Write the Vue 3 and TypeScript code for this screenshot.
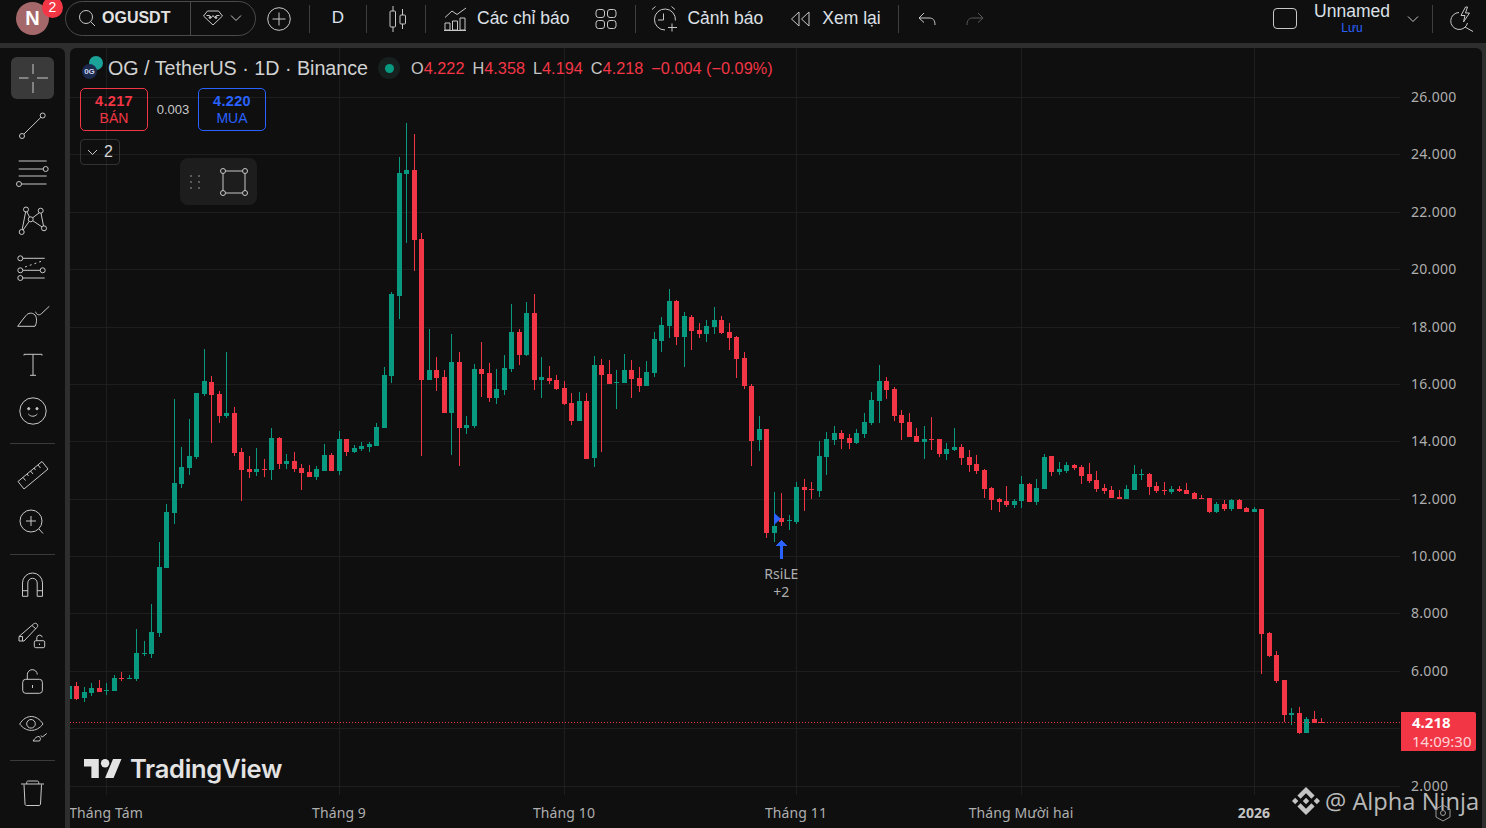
<script setup lang="ts">
type Row = [number, number, number, number, number]

const s8: Row[] = [
[0,1026,1038,1077,1080],[1,1041,1056,1074,1086],[1,1029,1044,1059,1068],[0,1020,1044,1056,1056],[1,1029,1050,1053,1065],[1,1005,1014,1053,1053],[0,996,1014,1017,1023],[1,1005,1014,1017,1017],[1,867,939,1017,1023],[1,903,939,942,948],[1,792,876,942,954],[1,606,681,879,891],[1,492,516,684,684],[1,177,429,519,552],[1,321,381,432,444],[1,237,348,384,405],[1,159,159,351,357],[1,27,123,162,168],[0,108,126,165,309],[0,153,162,228,249],[1,36,219,228,234],[0,201,219,339,348],[0,324,336,390,483],[0,348,387,396,414],[1,324,387,396,408],[0,357,387,390,411],[1,264,294,390,420],[0,291,294,372,387],[1,342,363,372,387],[0,336,363,387,396],[0,372,384,399,450],[0,375,396,411,411],[1,378,387,411,420],[1,312,345,393,393],[0,339,345,393,393],[1,273,297,393,405],[0,297,297,336,348],[1,315,324,336,339],[1,306,318,327,333],[1,306,312,321,336],[1,249,261,318,318],[1,81,105,264,264]]

const s9: Row[] = [
[1,546,552,798,819],[1,141,189,558,627],[1,39,180,192,399],[0,72,180,390,483],[0,369,387,810,1038],[1,657,780,810,810],[0,741,780,804,843],[0,780,801,909,909],[1,672,756,909,1035],[0,726,756,954,1068],[1,918,945,954,972],[1,762,777,948,954],[0,696,777,792,861],[0,759,789,864,876],[1,777,837,864,882],[1,735,774,840,855],[1,582,666,777,786],[0,657,666,735,765],[1,576,609,735,738],[0,552,609,810,840],[1,741,801,810,864],[0,768,804,813,822],[0,795,810,837,840],[0,813,834,882,885],[0,849,879,933,945],[1,846,873,933,933],[0,849,873,1047,1047],[1,738,765,1044,1071],[0,747,765,795,1026],[0,750,792,822,822],[1,780,816,819,897],[1,732,780,819,819],[0,750,780,807,864],[0,771,804,828,846],[1,753,786,828,828],[1,666,687,789,801],[1,621,645,693,726],[1,537,573,648,684],[0,570,573,681,705],[1,606,618,681,771],[0,615,621,663,720],[0,639,660,672,684],[1,630,648,672,696],[1,591,630,651,672],[0,618,630,669,672],[0,639,666,684,720],[0,678,681,747,804],[0,726,744,828,837],[0,822,828,993,1068],[1,918,957,990,1023]]

const s10: Row[] = [
[0,237,237,549,564],[1,426,528,549,576],[0,429,504,516,528],[1,495,510,513,540],[1,396,411,516,522],[0,387,411,420,483],[0,396,417,420,447],[1,273,318,423,441],[1,246,267,321,375],[1,228,249,270,285],[0,240,249,267,297],[0,252,264,279,297],[1,237,249,279,282],[1,189,216,252,264],[1,126,150,219,225],[1,45,93,153,219],[0,81,93,120,147],[0,111,117,198,213],[0,180,195,219,270],[0,189,216,261,261],[0,234,258,276,276],[1,228,267,276,327],[0,201,267,270,300],[0,267,267,312,321],[1,279,297,312,330],[1,234,291,300,303],[0,282,291,324,345],[0,300,321,345,366],[0,315,342,363,372],[0,357,360,417,444],[0,411,414,450,480],[0,444,447,456,486],[0,408,453,465,471],[1,447,453,465,474],[1,378,402,453,474],[0,399,402,456,456],[1,387,414,456,465],[1,312,321,417,417]]

const s11: Row[] = [
[0,48,48,96,108],[1,66,87,96,105],[1,66,75,93,99],[0,72,75,84,90],[0,75,81,108,132],[0,69,102,123,129],[0,93,120,147,156],[0,132,144,153,162],[0,138,150,174,174],[0,150,171,177,177],[1,135,147,177,177],[1,75,102,150,150],[1,87,102,105,120],[0,99,102,141,165],[0,126,138,153,159],[0,126,150,153,165],[1,138,147,156,162],[0,138,147,153,156],[0,129,150,162,162],[0,156,159,177,177],[0,165,174,177,177],[0,174,174,216,219],[1,186,192,216,219],[0,180,192,207,213],[1,177,180,207,213],[0,177,180,207,207],[0,201,204,216,216],[1,201,207,216,216]]

const s7: Row[] = [
[0,-333,-333,42,161],[0,36,39,108,111],[0,93,105,183,189],[0,180,180,285,306],[1,264,279,285,315],[0,261,279,339,342],[1,291,297,339,339],[0,273,297,309,309],[0,294,306,309,309]]

const X0 = 70
const Y0 = 48
const tag = (rows: Row[], base: number) =>
  rows.map(r => ({ g: r[0] === 1, v: r.slice(1).map(n => Math.round(base + n / 3) - Y0) }))
const all = [...tag(s8, 340), ...tag(s9, 110), ...tag(s10, 350), ...tag(s11, 440), ...tag(s7, 620)]

const candles = [
  { x: 69 - X0, g: true, by: 686 - Y0, bh: 13, wy: 686 - Y0, wh: 13 },
  ...all.map((c, i) => {
    const x = Math.round(76 + 7.5 * i + 0.01) - X0
    const [wt, bt, bb, wb] = c.v
    return { x, g: c.g, by: bt, bh: Math.max(1, bb - bt), wy: wt, wh: Math.max(1, wb - wt) }
  })
]

const hLines = [97, 154, 212, 269, 327, 384, 441, 499, 556, 613, 671, 728, 786].map(y => y - Y0)
const vLines = [106, 339, 564, 796, 1021, 1254].map(x => x - X0)
const prices = [
  { t: '26.000', y: 97 }, { t: '24.000', y: 154 }, { t: '22.000', y: 212 }, { t: '20.000', y: 269 },
  { t: '18.000', y: 327 }, { t: '16.000', y: 384 }, { t: '14.000', y: 441 }, { t: '12.000', y: 499 },
  { t: '10.000', y: 556 }, { t: '8.000', y: 613 }, { t: '6.000', y: 671 }, { t: '2.000', y: 786 }
].map(p => ({ t: p.t, y: p.y - Y0 + 5 }))
const times = [
  { t: 'Tháng Tám', x: 106, b: false }, { t: 'Tháng 9', x: 339, b: false }, { t: 'Tháng 10', x: 564, b: false },
  { t: 'Tháng 11', x: 796, b: false }, { t: 'Tháng Mười hai', x: 1021, b: false }, { t: '2026', x: 1254, b: true }
].map(t => ({ ...t, x: t.x - X0 }))
</script>

<template>
  <div class="app">
    <header class="top">
      <div class="avatar">N<span class="badge">2</span></div>
      <div class="pill">
        <div class="search">
          <svg width="20" height="20" viewBox="0 0 20 20" class="ic"><circle cx="9" cy="9" r="6.500"/><path d="M13.800 13.800 18 18"/></svg>
          <span class="sym">OGUSDT</span>
        </div>
        <div class="gem">
          <svg width="20" height="16" viewBox="0 0 20 16" class="ic"><path d="M4.500 1h11L19.500 6 10 15 .5 6z"/><path d="M3.500 5.500h3.200L8.500 7.500 10 5.500 11.500 7.500 13.300 5.500h3.200"/><circle cx="7" cy="7.500" r=".9" fill="#ccc"/><circle cx="13" cy="7.500" r=".9" fill="#ccc"/></svg>
          <svg width="12" height="8" viewBox="0 0 12 8" class="ic"><path d="m1 1.500 5 5 5-5"/></svg>
        </div>
      </div>
      <svg class="ic plus" width="24" height="24" viewBox="0 0 24 24"><circle cx="12" cy="12" r="11.300"/><path d="M12 5.500v13M5.500 12h13"/></svg>
      <i class="sep s1"></i>
      <span class="dbtn">D</span>
      <i class="sep s2"></i>
      <svg class="ic candle" width="19" height="26" viewBox="0 0 19 26"><path d="M5 0v5M5 21v5M14.500 3v6M14.500 18v5"/><rect x="2" y="5" width="5.500" height="16" rx="1"/><rect x="12" y="9" width="5.500" height="9" rx="1"/></svg>
      <i class="sep s3"></i>
      <svg class="ic ind" width="23" height="24" viewBox="0 0 23 24"><path d="M1 10.500 8 4l5 3.500L22 1"/><path d="M1 23v-7h5v7zM8.500 23v-9h5v9zM16 23V11h5v12zM0 23.500h22"/></svg>
      <span class="lbl l1">Các chỉ báo</span>
      <svg class="ic grid4" width="22" height="20" viewBox="0 0 22 20"><rect x="1" y=".5" width="8.500" height="8" rx="2.500"/><rect x="12.500" y=".5" width="8.500" height="8" rx="2.500"/><rect x="1" y="11.500" width="8.500" height="8" rx="2.500"/><rect x="12.500" y="11.500" width="8.500" height="8" rx="2.500"/></svg>
      <i class="sep s4"></i>
      <svg class="ic alarm" width="27" height="26" viewBox="0 0 27 26"><path d="M14 24a10.500 10.500 0 1 1 10.400-9.500"/><path d="M12.500 7.500v6.500H7M1 3.500 4.500.5M20.500.5 24 3.500M21 17.500v8M17 21.500h9"/></svg>
      <span class="lbl l2">Cảnh báo</span>
      <svg class="ic rew" width="20" height="16" viewBox="0 0 20 16"><path d="M9 1 1.500 8 9 15zM19 1l-7.500 7 7.500 7z"/></svg>
      <span class="lbl l3">Xem lại</span>
      <i class="sep s5"></i>
      <svg class="ic undo" width="18" height="14" viewBox="0 0 18 14"><path d="M6 1 1 6l5 4.500M1 6h10c4 0 6 2 6 7"/></svg>
      <svg class="ic redo" width="18" height="14" viewBox="0 0 18 14"><path d="m12 1 5 5-5 4.500M17 6H7c-4 0-6 2-6 7"/></svg>
      <div class="spacer"></div>
      <div class="layout"></div>
      <div class="named"><span class="nm">Unnamed</span><span class="save">Lưu</span></div>
      <svg class="ic chev2" width="12" height="8" viewBox="0 0 12 8"><path d="m1 1.500 5 5 5-5"/></svg>
      <i class="sep s6"></i>
      <svg class="ic bolt" width="24" height="26" viewBox="0 0 24 26"><path d="M9 6.500A8.500 8.500 0 1 0 17.500 17M15 21l8 4.500"/><path d="M15.500 1 11 9.500h4l-1.500 6.500L19.500 7h-4L17.500 1z"/></svg>
    </header>

    <main class="body">
      <aside class="tools">
        <div class="tool active">
          <svg class="ic" width="36" height="36" viewBox="0 0 36 36"><path d="M18 4v10M18 22v11M4 18h9.500M22 18h11"/></svg>
        </div>
        <div class="tool"><svg class="ic" width="36" height="36" viewBox="0 0 36 36"><circle cx="27.700" cy="7.500" r="2.500"/><circle cx="7" cy="28" r="2.500"/><path d="M9 26 25.900 9.300"/></svg></div>
        <div class="tool"><svg class="ic" width="36" height="36" viewBox="0 0 36 36"><path d="M3.700 6h28M3.700 14h24.500M3.700 21h28M6.500 29h25"/><circle cx="30.700" cy="14" r="2.500"/><circle cx="4" cy="29" r="2.500"/></svg></div>
        <div class="tool"><svg class="ic" width="36" height="36" viewBox="0 0 36 36"><path d="M11 7 6.700 29M11 7l4.700 9.300L29 25.300M15.700 16.300 25.700 8.700 29 25.300M6.700 29l9-12.700"/><circle cx="6.700" cy="29" r="2.500" fill="#0f0f0f"/><circle cx="29" cy="25.300" r="2.500" fill="#0f0f0f"/><circle cx="15.700" cy="16.300" r="2.500" fill="#0f0f0f"/><circle cx="25.700" cy="7.700" r="2.500" fill="#0f0f0f"/><circle cx="11" cy="6.500" r="2.500" fill="#0f0f0f"/></svg></div>
        <div class="tool"><svg class="ic" width="36" height="36" viewBox="0 0 36 36"><circle cx="5.300" cy="8.300" r="2.500"/><circle cx="5.300" cy="20.300" r="2.500"/><circle cx="5.300" cy="28" r="2.500"/><circle cx="27.700" cy="20.300" r="2.500"/><path d="M8 8.300h21.700M8 20.300h17M8 28h21.700"/><path d="M10 17l18-6.300" stroke-dasharray="2 3"/></svg></div>
        <div class="tool"><svg class="ic" width="36" height="36" viewBox="0 0 36 36"><path d="M2.700 28.300H20C22 25 22 19 20 17 17 14 13 15 11 17.500 8 21 5 25 2.700 28.300z"/><path d="M20.700 13.700c.3 3 3.500 4 5.500 2.200l8.100-7.600"/></svg></div>
        <div class="tool"><svg class="ic" width="36" height="36" viewBox="0 0 36 36"><path d="M9 9.500V8.300h18v1.200M18 8.300v21M15 29.300h6"/></svg></div>
        <div class="tool"><svg class="ic" width="36" height="36" viewBox="0 0 36 36"><circle cx="18" cy="18" r="13.200"/><circle cx="13.700" cy="15.700" r="1.100" fill="#c8c8c8"/><circle cx="22" cy="15.700" r="1.100" fill="#c8c8c8"/><path d="M13.300 21c2.500 3 6.500 3 9 0"/></svg></div>
        <div class="divider"></div>
        <div class="tool"><svg class="ic" width="36" height="36" viewBox="0 0 36 36"><path d="M3 24.500 27 4.500l6 7.500L9 32z"/><path d="M8 20.500l2.500 3M12 17l1.500 2M15.500 14l2.500 3M19 11l1.500 2M23 8l2.500 3"/></svg></div>
        <div class="tool"><svg class="ic" width="36" height="36" viewBox="0 0 36 36"><circle cx="16" cy="17" r="11"/><path d="M24 25l4 4.500M16 12v10M11 17h10"/></svg></div>
        <div class="divider d2"></div>
        <div class="tool"><svg class="ic" width="36" height="36" viewBox="0 0 36 36"><path d="M7.700 29.300V16a10 10 0 0 1 20 0v13.300h-5.300V16a4.600 4.600 0 0 0-9.400 0v13.300zM7.700 23.700H13M22.400 23.700h5.300" transform="translate(-.200 -2)"/></svg></div>
        <div class="tool"><svg class="ic" width="36" height="36" viewBox="0 0 36 36"><path d="M4 24v-4.500L18.500 7c1.200-1 2.500-1 3.500 0s1 2.200 0 3.300L9 24zM4 19.500h3.500V24M17 8.500l4 3.500"/><rect x="19.300" y="23.700" width="10.400" height="7" rx="1.500"/><path d="M21.800 23.700v-3a2.800 2.800 0 0 1 5.500-.5M24.500 26.500v1.500"/></svg></div>
        <div class="tool"><svg class="ic" width="36" height="36" viewBox="0 0 36 36"><rect x="7.700" y="15.300" width="19.700" height="14" rx="3"/><path d="M12.300 15.300v-4.500a5 5 0 0 1 10-.3M17.500 21v3" /></svg></div>
        <div class="tool t-eye"><svg class="ic" width="36" height="36" viewBox="0 0 36 36"><path d="M4.700 14c6-10 17-10 23.300 0-6.300 8.500-17 8.500-23.300 0z"/><circle cx="16" cy="13.800" r="4.300"/><path d="M18 31h6.500c1.500-1.800 1-3.700-.5-4.500-2-.3-4 1.500-6 4.500zM26 25.500c.3 1.500 1 1.500 2 1l3.700-3"/></svg></div>
        <div class="divider d3"></div>
        <div class="tool"><svg class="ic" width="36" height="36" viewBox="0 0 36 36"><path d="M6 8h23M11.700 8V6.500c0-1 .5-1.500 1.500-1.500h9c1 0 1.500.5 1.500 1.500V8M9 8.500l1 19.500c0 .8.600 1.500 1.500 1.500h12.500c.8 0 1.400-.6 1.500-1.500l1-19.500"/></svg></div>
      </aside>

      <section class="chart">
        <svg class="canvas" width="1412" height="780" viewBox="0 0 1412 780">
          <g shape-rendering="crispEdges">
            <rect v-for="y in hLines" :key="'h' + y" x="0" :y="y" width="1330" height="1" fill="#1e1e1e" />
            <rect v-for="x in vLines" :key="'v' + x" :x="x" y="0" width="1" height="747" fill="#1e1e1e" />
            <g v-for="(c, i) in candles" :key="i" :fill="c.g ? '#089981' : '#f23645'">
              <rect :x="c.x" :y="c.wy" width="1" :height="c.wh" />
              <rect :x="c.x - 2" :y="c.by" width="5" :height="c.bh" />
            </g>
            <path d="M0 674.500H1331" stroke="#f23645" stroke-dasharray="1 2" />
          </g>
          <path d="M704 464.700v12.300l6.700-6.200z" fill="#2962ff" />
          <path d="M711.300 492 705 498h4.600v13h3.400v-13h4.600z" fill="#2962ff" shape-rendering="crispEdges" />
          <text class="note" x="711.300" y="531" text-anchor="middle">RsiLE</text>
          <text class="note" x="711.300" y="549" text-anchor="middle">+2</text>
          <text v-for="p in prices" :key="p.t" class="axis price" x="1341" :y="p.y">{{ p.t }}</text>
          <text v-for="t in times" :key="t.t" class="axis" :class="{ bold: t.b }" :x="t.x" y="770" text-anchor="middle">{{ t.t }}</text>
        </svg>

        <div class="legend">
          <div class="logos">
            <span class="lg-a"></span>
            <span class="lg-b">0G</span>
          </div>
          <span class="title">OG / TetherUS · 1D · Binance</span>
          <span class="halo"><i></i></span>
          <span class="ohlc first"><b>O</b>4.222</span>
          <span class="ohlc"><b>H</b>4.358</span>
          <span class="ohlc"><b>L</b>4.194</span>
          <span class="ohlc"><b>C</b>4.218</span>
          <span class="ohlc">−0.004 (−0.09%)</span>
        </div>

        <div class="trade">
          <div class="tbox sell"><strong>4.217</strong><span>BÁN</span></div>
          <span class="spread">0.003</span>
          <div class="tbox buy"><strong>4.220</strong><span>MUA</span></div>
        </div>
        <div class="collapse">
          <svg class="ic" width="11" height="7" viewBox="0 0 11 7"><path d="m1 1 4.500 4.500L10 1"/></svg>
          <span>2</span>
        </div>

        <div class="floating">
          <span class="grip"><i></i><i></i><i></i><i></i><i></i><i></i></span>
          <svg class="ic" width="28" height="28" viewBox="0 0 28 28"><path d="M3 5.500V22.500M25 5.500V22.500M5.500 3H22.500M5.500 25H22.500"/><circle cx="3" cy="3" r="2.500"/><circle cx="25" cy="3" r="2.500"/><circle cx="3" cy="25" r="2.500"/><circle cx="25" cy="25" r="2.500"/></svg>
        </div>

        <div class="tvlogo">
          <svg width="38" height="21" viewBox="0 3.500 36 19"><path fill="#e3e3e3" d="M14 22H7V11H0V4h14v18zM28 22h-8l7.500-18h8L28 22z"/><circle fill="#e3e3e3" cx="20" cy="8" r="4"/></svg>
          <span>TradingView</span>
        </div>

        <div class="last">
          <strong>4.218</strong>
          <span>14:09:30</span>
        </div>

        <div class="mark">
          <svg width="28" height="28" viewBox="0 0 126.610 126.610" fill="#d4d4d4"><path d="m38.730 53.200 24.590-24.580 24.600 24.600 14.300-14.310L63.320 0 24.430 38.900z"/><path d="m0 63.310 14.300-14.310 14.310 14.310-14.310 14.300z"/><path d="m38.730 73.410 24.590 24.590 24.600-24.600 14.310 14.290-38.900 38.910-38.910-38.880z"/><path d="m98 63.310 14.300-14.310 14.310 14.300-14.310 14.320z"/><path d="m77.830 63.300-14.510-14.520L52.590 59.510l-1.240 1.230-2.540 2.540 14.510 14.500 14.510-14.470z"/></svg>
          <span>@ Alpha Ninja</span>
        </div>

        <svg class="gear ic" width="18" height="18" viewBox="0 0 18 18"><path d="M9 1 16 5v8l-7 4-7-4V5z"/><circle cx="9" cy="9" r="2.500"/></svg>
      </section>
    </main>
  </div>
</template>

<style scoped>
.app { width: 1486px; height: 828px; background: #2e2e2e; display: flex; flex-direction: column; overflow: hidden; font-family: "Liberation Sans", Arial, sans-serif; color: #d1d1d1; }
.top { height: 43px; flex: none; background: #0f0f0f; display: flex; align-items: center; position: relative; color: #dbdbdb; }
.ic { fill: none; stroke: #c8c8c8; stroke-width: 1; flex: none; }
.avatar { width: 33px; height: 33px; margin: -7px 0 0 16px; border-radius: 50%; background: #a5686a; color: #fff; font-size: 20px; font-weight: 700; display: flex; align-items: center; justify-content: center; position: relative; flex: none; }
.badge { position: absolute; left: 26px; top: -5px; width: 21px; height: 21px; border-radius: 50%; background: #f23645; color: #fff; font-size: 14px; font-weight: 400; display: flex; align-items: center; justify-content: center; }
.pill { width: 191px; height: 35px; margin: -7px 0 0 16px; border: 1px solid #4a4a4a; border-radius: 18px; box-sizing: border-box; display: flex; flex: none; }
.search { width: 125px; border-right: 1px solid #4a4a4a; display: flex; align-items: center; padding-left: 11px; gap: 5px; box-sizing: border-box; }
.sym { font-size: 16px; font-weight: 700; color: #e2e2e2; }
.gem { display: flex; align-items: center; padding-left: 12px; gap: 7px; }
.plus { margin: -5px 0 0 11px; }
.sep { width: 1px; height: 28px; margin-top: -5px; background: #3e3e3e; flex: none; }
.s1 { margin-left: 18px; }
.dbtn { width: 56px; margin-top: -7px; text-align: center; font-size: 17px; color: #dde4f0; }
.candle { margin: -5px 0 0 21px; }
.s3 { margin-left: 18px; }
.ind { margin: -5px 0 0 18px; }
.lbl { font-size: 17.500px; margin-top: -7px; white-space: nowrap; color: #dde0e6; }
.l1 { margin-left: 10px; }
.grid4 { margin: -5px 0 0 26px; }
.s4 { margin-left: 18px; }
.alarm { margin: -5px 0 0 15px; }
.l2 { margin-left: 9px; }
.rew { margin: -5px 0 0 27px; }
.l3 { margin-left: 12px; }
.s5 { margin-left: 17px; }
.undo { margin: -5px 0 0 19px; }
.redo { margin: -5px 0 0 30px; stroke: #585858; }
.spacer { flex: 1; }
.layout { width: 24px; height: 21px; margin-top: -7px; border: 1px solid #c8c8c8; border-radius: 4px; box-sizing: border-box; flex: none; }
.named { width: 80px; margin: -7px 0 0 15px; display: flex; flex-direction: column; align-items: center; line-height: 1; }
.nm { font-size: 17.500px; color: #dbe0e8; margin-top: 1px; }
.save { font-size: 12px; color: #2962ff; margin-top: 1px; }
.chev2 { margin: -5px 0 0 15px; }
.s6 { margin-left: 13px; }
.bolt { margin: -5px 12px 0 17px; }

.body { flex: 1; margin-top: 5px; display: flex; min-height: 0; }
.tools { width: 65px; flex: none; background: #0f0f0f; border-top-right-radius: 6px; display: flex; flex-direction: column; align-items: center; padding-top: 6.200px; box-sizing: border-box; }
.tool { width: 43px; height: 47.600px; flex: none; display: flex; align-items: center; justify-content: center; }
.tool.active { height: 42px; margin: 3px 0 2.600px; border-radius: 6px; background-color: #3a3a3a; background-image: radial-gradient(#4a4a4a 0.6px, transparent 0.7px); background-size: 4px 4px; }
.divider { width: 45px; height: 1px; margin: 8px 0 7px; background: #3a3a3a; flex: none; }
.d2 { margin: 8px 0 8px; }
.d3 { margin: 9px 0 9px; }
.t-eye { height: 45px; }

.chart { flex: 1; margin: 0 4px 0 5px; background: #0f0f0f; border-radius: 6px 6px 0 0; position: relative; overflow: hidden; }
.canvas { position: absolute; left: 0; top: 0; display: block; }
.axis { font-family: "Noto Sans", sans-serif; font-size: 14px; fill: #aeaeae; letter-spacing: .1px; }
.axis.price { letter-spacing: .3px; }
.axis.bold { font-weight: 700; fill: #c4c4c4; }
.note { font-family: "Noto Sans", sans-serif; font-size: 14px; fill: #aeaeae; }

.legend { position: absolute; left: 12px; top: 8px; height: 24px; display: flex; align-items: center; white-space: nowrap; }
.logos { width: 22px; height: 24px; position: relative; flex: none; }
.lg-a { position: absolute; left: 7px; top: 0; width: 14px; height: 14px; border-radius: 50%; background: #1ba39a; }
.lg-b { position: absolute; left: 0; top: 8px; width: 15px; height: 15px; border-radius: 50%; background: #1c2a4d; color: #cdd6ee; font-size: 8px; line-height: 15px; text-align: center; font-weight: 700; }
.title { margin-left: 4px; font-size: 19.700px; color: #d2d2d2; }
.halo { width: 22px; height: 22px; margin-left: 10px; border-radius: 50%; background: #16211f; display: flex; align-items: center; justify-content: center; flex: none; }
.halo i { width: 9px; height: 9px; border-radius: 50%; background: #089981; }
.ohlc { font-size: 16.300px; color: #f23645; margin-right: 8px; }
.ohlc.first { margin-left: 11px; }
.ohlc b { font-weight: 400; color: #c4c4c4; }

.trade { position: absolute; left: 10px; top: 40px; display: flex; align-items: center; }
.tbox { width: 68px; height: 43px; border: 1px solid; border-radius: 5px; box-sizing: border-box; display: flex; flex-direction: column; align-items: center; justify-content: center; line-height: 17px; }
.tbox strong { font-size: 14.500px; letter-spacing: .3px; }
.tbox span { font-size: 14px; }
.sell { color: #f23645; border-color: #f23645; }
.buy { color: #2962ff; border-color: #2962ff; }
.spread { width: 50px; text-align: center; font-size: 13px; color: #c9c9c9; }
.collapse { position: absolute; left: 10px; top: 91px; width: 40px; height: 26px; border: 1px solid #333; border-radius: 4px; box-sizing: border-box; display: flex; align-items: center; justify-content: center; gap: 6px; font-size: 16px; color: #d4d4d4; }
.floating { position: absolute; left: 110px; top: 110px; width: 77px; height: 47px; border-radius: 8px; background-color: #1d1d1d; background-image: radial-gradient(#2a2a2a 0.6px, transparent 0.7px); background-size: 4px 4px; display: flex; align-items: center; box-sizing: border-box; padding-left: 10px; gap: 20px; }
.grip { width: 10px; display: grid; grid-template-columns: 2px 2px; gap: 4px 6px; flex: none; }
.grip i { width: 2px; height: 2px; background: #5a5a5a; }
.tvlogo { position: absolute; left: 14px; top: 705px; display: flex; align-items: center; gap: 8px; }
.tvlogo span { font-family: Inter, sans-serif; font-weight: 600; font-size: 25.500px; color: #e3e3e3; letter-spacing: -.3px; }
.last { position: absolute; left: 1331px; top: 664px; width: 75px; height: 39px; background: #f23645; border-radius: 0 2px 2px 0; display: flex; flex-direction: column; box-sizing: border-box; padding: 1px 0 0 11px; font-family: "Noto Sans", sans-serif; line-height: 19px; font-size: 15px; color: #ffd3d7; }
.last strong { color: #fff; }
.mark { position: absolute; left: 1222px; top: 737px; display: flex; align-items: center; gap: 5px; color: #c8c8c8; opacity: .92; }
.mark span { font-family: "Open Sans", sans-serif; font-size: 23.700px; white-space: nowrap; }
.gear { position: absolute; left: 1364px; top: 756px; stroke: #9a9a9a; }
</style>

<style>
html, body { margin: 0; background: #0f0f0f; }
</style>
